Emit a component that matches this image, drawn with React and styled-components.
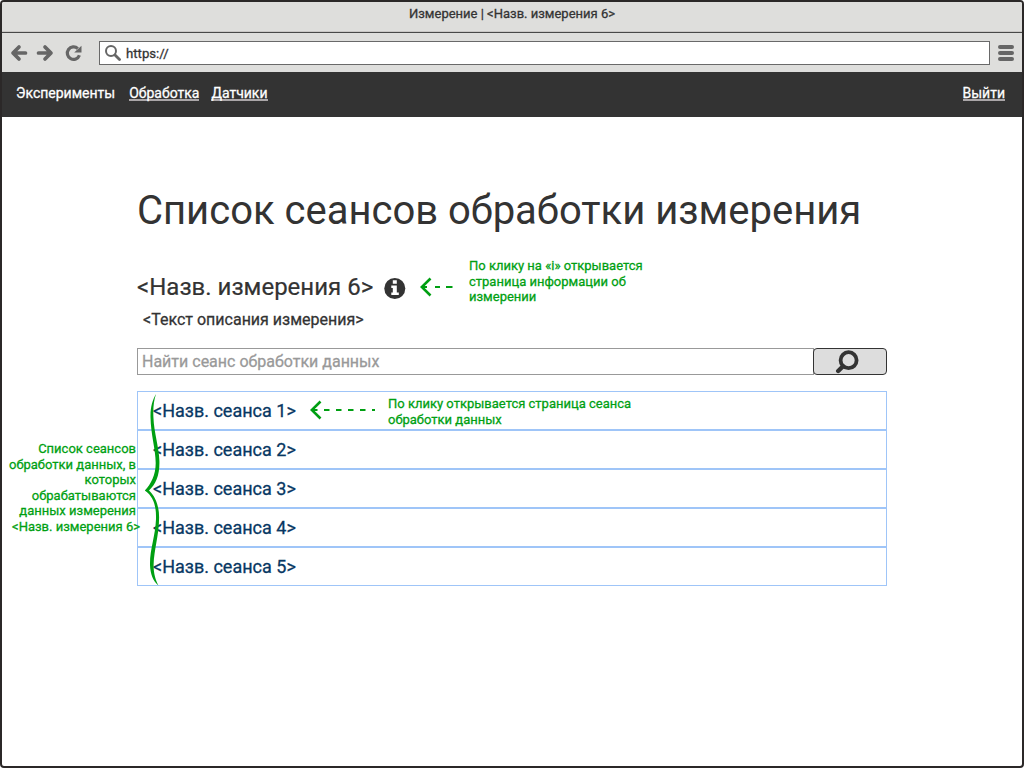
import React from "react";
import styled, { createGlobalStyle } from "styled-components";

const GlobalStyle = createGlobalStyle`
  *, *::before, *::after { box-sizing: border-box; }
  body { margin: 0; background: #fff; font-family: Roboto, "Liberation Sans", sans-serif; color: #333; }
`;

const Window = styled.div`
  position: relative;
  display: flex;
  flex-direction: column;
  width: 1024px;
  height: 768px;
  overflow: hidden;
  border: 2px solid #2b2828;
  border-radius: 4px;
  background: #fff;
  -webkit-text-stroke: 0.28px currentColor;
`;

const TitleBar = styled.header`
  height: 31px;
  flex: none;
  background: #dededc;
  border-bottom: 1px solid #484848;
  box-shadow: inset 0 -1px #c9c7c5;
  text-align: center;
  font-size: 13px;
  line-height: 24px;
`;

const Toolbar = styled.div`
  display: flex;
  align-items: center;
  height: 39px;
  flex: none;
  padding: 1px 8px 0 8px;
  background: #dededc;
`;

const Glyph = styled.svg`
  display: block;
  flex: none;
  margin-left: ${(p) => p.$gap || 0}px;
`;

const Address = styled.div`
  display: flex;
  align-items: center;
  flex: 1;
  height: 24px;
  margin: 0 8px 0 16px;
  padding-left: 5px;
  border: 1px solid #696969;
  background: #fff;
  font-size: 13px;
  line-height: 22px;
`;

const Url = styled.span`
  margin-left: 5px;
  padding-top: 1px;
  font-size: 13.2px;
`;

const Nav = styled.nav`
  display: flex;
  height: 45px;
  flex: none;
  margin: 0 -2px;
  padding: 13px 19px 0 16px;
  background: #333;
`;

const NavLink = styled.a`
  height: 16px;
  margin-left: ${(p) => p.$gap || 0};
  color: #fff;
  font-size: 14px;
  line-height: 17px;
  border-bottom: ${(p) => (p.$current ? "0" : "2px solid #aaa6a8")};
`;

const Main = styled.main`
  display: flex;
  flex-direction: column;
  width: 750px;
  margin-left: 135px;
  padding-top: 67px;
`;

const Heading = styled.h1`
  margin: 0;
  height: 52px;
  font-size: 40px;
  font-weight: 400;
  line-height: 53px;
  white-space: nowrap;
  -webkit-text-stroke: 0;
`;

const Subject = styled.div`
  display: flex;
  align-items: flex-start;
  height: 54px;
  margin-top: 20px;
`;

const SubjectName = styled.h2`
  margin: 17px 0 0;
  width: 247px;
  font-size: 24px;
  font-weight: 400;
  line-height: 28px;
  white-space: nowrap;
  -webkit-text-stroke: 0.2px currentColor;
`;

const SubjectGlyph = styled(Glyph)`
  margin-top: 21px;
`;

const Note = styled.p`
  margin: 0;
  color: #009f12;
  font-size: 13px;
  line-height: 15.6px;
  white-space: nowrap;
`;

const SubjectNote = styled(Note)`
  margin-top: 2px;
  margin-left: 15px;
`;

const Description = styled.p`
  margin: 0 0 0 6px;
  height: 38px;
  font-size: 16px;
  line-height: 20px;
`;

const Search = styled.form`
  display: flex;
  height: 27px;
`;

const SearchField = styled.div`
  width: 677px;
  padding-left: 4px;
  border: 1px solid #999;
  color: #999;
  font-size: 16px;
  line-height: 26px;
`;

const SearchButton = styled.button`
  width: 74px;
  margin-left: -1px;
  padding: 0 0 0 21px;
  border: 1px solid #333;
  border-radius: 4px;
  background: #ddd;
`;

const List = styled.ul`
  margin: 16px 0 0;
  padding: 0;
  list-style: none;
`;

const Session = styled.li`
  display: flex;
  height: 39px;
  padding-left: 15px;
  border: 1px solid #9fc5f8;
`;

const SessionName = styled.a`
  width: 157px;
  color: #073763;
  font-size: 18px;
  line-height: 38px;
  white-space: nowrap;
`;

const SessionNote = styled(Note)`
  margin: 4px 0 0 13px;
`;

const SideNote = styled(Note)`
  position: absolute;
  top: 439px;
  left: 6px;
  width: 128px;
  text-align: right;
`;

const NoteLine = styled.span`
  display: block;
  margin-right: ${(p) => p.$hang || 0}px;
`;

const Brace = styled.svg`
  position: absolute;
  top: 391px;
  left: 141px;
`;

const sessions = [1, 2, 3, 4, 5];

function Arrow({ width, dash, gap, top }) {
  return (
    <Glyph width={width} height="20" viewBox={`0 0 ${width} 20`} $gap={gap} style={{ marginTop: top }}>
      <path d="M10.5 1.5 1.8 10l8.7 8.5" fill="none" stroke="#009f12" strokeWidth="2.6" />
      <path d={`M2 10H${width}`} fill="none" stroke="#009f12" strokeWidth="2" strokeDasharray={dash} />
    </Glyph>
  );
}

function BackIcon({ flip }) {
  return (
    <Glyph width="18" height="18" viewBox="0 0 18 18" $gap={flip ? 8 : 0}>
      <path
        transform={flip ? "matrix(-1 0 0 1 18 0)" : undefined}
        d="M9 3 3 9l6 6M4 9h11.5"
        fill="none"
        stroke="#666"
        strokeWidth="3.7"
        strokeLinecap="round"
        strokeLinejoin="round"
      />
    </Glyph>
  );
}

export default function App() {
  return (
    <Window>
      <GlobalStyle />
      <TitleBar>Измерение | &lt;Назв. измерения 6&gt;</TitleBar>
      <Toolbar>
        <BackIcon />
        <BackIcon flip />
        <Glyph width="18" height="18" viewBox="0 0 18 18" $gap={11}>
          <path d="M12.8 4.6A6.2 6.2 0 1 0 14.4 11.2" fill="none" stroke="#666" strokeWidth="3.2" />
          <path d="M16.5 1.8V8.6H9.2Z" fill="#666" />
        </Glyph>
        <Address>
          <Glyph width="16" height="16" viewBox="0 0 16 16">
            <circle cx="6" cy="6" r="5" fill="none" stroke="#666" strokeWidth="2" />
            <path d="m10 10 4.5 4.5" stroke="#666" strokeWidth="2.8" strokeLinecap="round" />
          </Glyph>
          <Url>https://</Url>
        </Address>
        <Glyph width="16" height="18" viewBox="0 0 16 18">
          <path d="M2 3h12M2 9h12M2 15h12" stroke="#666" strokeWidth="4" strokeLinecap="round" />
        </Glyph>
      </Toolbar>
      <Nav>
        <NavLink $current>Эксперименты</NavLink>
        <NavLink $gap="14px">Обработка</NavLink>
        <NavLink $gap="12px">Датчики</NavLink>
        <NavLink $gap="auto">Выйти</NavLink>
      </Nav>
      <Main>
        <Heading>Список сеансов обработки измерения</Heading>
        <Subject>
          <SubjectName>&lt;Назв. измерения 6&gt;</SubjectName>
          <SubjectGlyph width="22" height="22" viewBox="0 0 22 22">
            <circle cx="10.8" cy="11.5" r="10.5" fill="#333" />
            <path d="M8.8 3.3h4v3.4h-4zM7.3 8.5h5.5v7h2V18H7.3v-2.5h1.5V11H7.3z" fill="#fff" />
          </SubjectGlyph>
          <Arrow width={34} dash="5 8 5 6 6.5 9" gap={14} top={21} />
          <SubjectNote>
            По клику на «i» открывается
            <br />
            страница информации об
            <br />
            измерении
          </SubjectNote>
        </Subject>
        <Description>&lt;Текст описания измерения&gt;</Description>
        <Search>
          <SearchField>Найти сеанс обработки данных</SearchField>
          <SearchButton type="button" aria-label="Найти">
            <Glyph width="24" height="24" viewBox="0 0 24 24">
              <circle cx="13.6" cy="10.2" r="8" fill="none" stroke="#333" strokeWidth="3.8" />
              <path d="m8 16.2-4.8 4.8" stroke="#333" strokeWidth="4.4" strokeLinecap="round" />
            </Glyph>
          </SearchButton>
        </Search>
        <List>
          {sessions.map((n) => (
            <Session key={n}>
              <SessionName>&lt;Назв. сеанса {n}&gt;</SessionName>
              {n === 1 && (
                <>
                  <Arrow width={65} dash="5.5 6.5" gap={0} top={8} />
                  <SessionNote>
                    По клику открывается страница сеанса
                    <br />
                    обработки данных
                  </SessionNote>
                </>
              )}
            </Session>
          ))}
        </List>
      </Main>
      <SideNote as="div">
        <NoteLine>Список сеансов</NoteLine>
        <NoteLine>обработки данных, в</NoteLine>
        <NoteLine>которых</NoteLine>
        <NoteLine>обрабатываются</NoteLine>
        <NoteLine>данных измерения</NoteLine>
        <NoteLine $hang={-4}>&lt;Назв. измерения 6&gt;</NoteLine>
      </SideNote>
      <Brace width="20" height="195" viewBox="0 0 20 195">
        <path
          d="M13 1C9.5 7 7.3 14 7.5 24C7.8 42 12.6 56 12.7 70C12.7 82 8 91 1.8 97.5C10 103 13.4 112 13 126C12.3 144 6.7 156 7 172C7.3 181 10 188 15.5 192.5C12.6 187 10.6 181 10.6 172C11 156 16.2 142 16.1 124C16 112 12 103 6 97.5C13 91 16.8 82 16.4 68C16 54 11 40 10.4 24C10 14 10.8 8 13 1Z"
          fill="#009f12"
        />
      </Brace>
    </Window>
  );
}
